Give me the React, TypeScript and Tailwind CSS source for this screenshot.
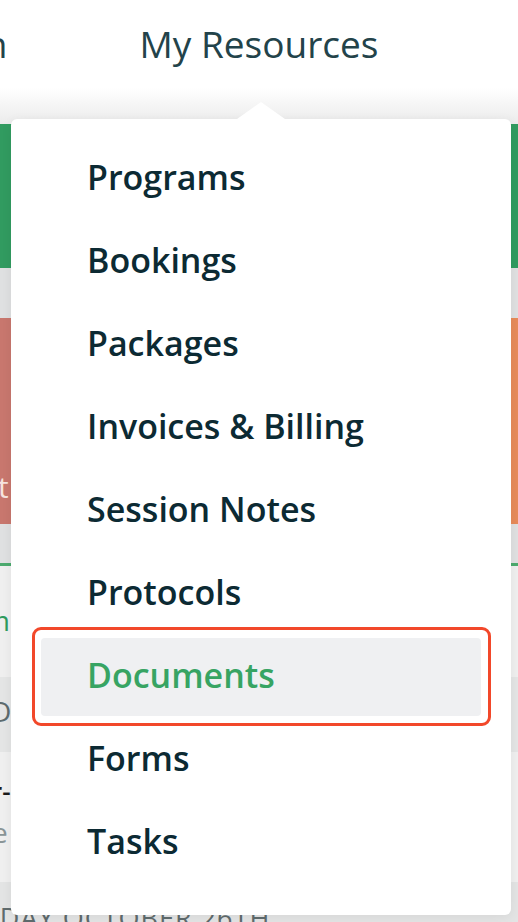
import React from 'react';

const items = [
  'Programs',
  'Bookings',
  'Packages',
  'Invoices & Billing',
  'Session Notes',
  'Protocols',
  'Documents',
  'Forms',
  'Tasks',
];

const ACTIVE = 'Documents';

const ResourcesMenu = () => (
  <div className="absolute left-[11px] top-[119px] w-[500px] rounded-[6px] bg-white shadow-[0_2px_12px_rgba(0,0,0,0.06)]">
    {/* caret */}
    <div className="absolute -top-[17px] left-[226px] h-0 w-0 border-x-[24px] border-b-[17px] border-x-transparent border-b-white" />
    <ul className="flex flex-col gap-[5px] px-[30px] pt-[21px] pb-[33px]">
      {items.map((item) => {
        const isActive = item === ACTIVE;
        return (
          <li
            key={item}
            className={`relative h-[78px] rounded-[4px] pl-[46px] text-[34px] font-semibold leading-[74px] ${
              isActive ? 'bg-[#eff0f2] text-[#37a463]' : 'text-[#0c2a33]'
            }`}
          >
            {item}
            {isActive && (
              <span className="pointer-events-none absolute -top-[11px] -right-[10px] -bottom-[10px] -left-[9px] rounded-[9px] border-[3px] border-[#f2482a]" />
            )}
          </li>
        );
      })}
    </ul>
  </div>
);

export default function App() {
  return (
    <div className="relative h-[922px] w-[518px] overflow-hidden bg-[#efefef] font-['Open_Sans',sans-serif]">
      {/* header */}
      <header className="grid h-[88px] grid-cols-[1fr_auto_1fr] bg-white pt-[26px]">
        <div className="flex justify-end overflow-hidden">
          <span className="mr-[132px] whitespace-nowrap text-[37px] font-medium leading-[36px] text-[#23434a]">
            Learn
          </span>
        </div>
        <h1 className="whitespace-nowrap text-[37px] font-medium leading-[36px] text-[#23434a]">
          My Resources
        </h1>
        <div />
      </header>

      {/* page behind the menu */}
      <div className="h-[36px] bg-gradient-to-b from-white to-[#ebebeb]" />
      <div className="h-[144px] bg-[#319b60]" />
      <div className="h-[50px] bg-[#dfe0e1]" />
      <div className="grid h-[206px] grid-cols-2">
        <div className="flex items-end overflow-hidden bg-[#c8776e] pb-[22px]">
          <span className="-ml-[58px] whitespace-nowrap text-[30px] font-medium leading-[30px] text-[#f6e3df]">
            Start
          </span>
        </div>
        <div className="bg-[#e78b5a]" />
      </div>
      <div className="h-[39px] bg-[#dfe0e1]" />
      <div className="h-[3px] bg-[#4caa6e]" />
      <div className="h-[111px] overflow-hidden pt-[40px]">
        <span className="-ml-[16px] whitespace-nowrap text-[28px] font-medium leading-[28px] text-[#2f9b5e]">
          m
        </span>
      </div>
      <div className="flex h-[75px] items-start overflow-hidden bg-[#e4e5e5] pt-[20px]">
        <span className="-ml-[9px] whitespace-nowrap text-[28px] leading-[28px] text-[#5d6b6e]">
          D
        </span>
      </div>
      <div className="flex h-[130px] flex-col overflow-hidden pt-[26px]">
        <span className="-ml-[9px] whitespace-nowrap text-[26px] font-semibold leading-[26px] text-[#1b1b1b]">
          r-
        </span>
        <span className="mt-[14px] -ml-[8px] whitespace-nowrap text-[28px] leading-[28px] text-[#8a9597]">
          e
        </span>
      </div>
      <div className="h-[40px] overflow-hidden bg-[#e3e4e4] pt-[22px]">
        <span className="-ml-[38px] block whitespace-nowrap text-[27px] leading-[27px] tracking-[1px] text-[#5f6b6d]">
          TODAY OCTOBER 26TH
        </span>
      </div>

      <ResourcesMenu />
    </div>
  );
}
